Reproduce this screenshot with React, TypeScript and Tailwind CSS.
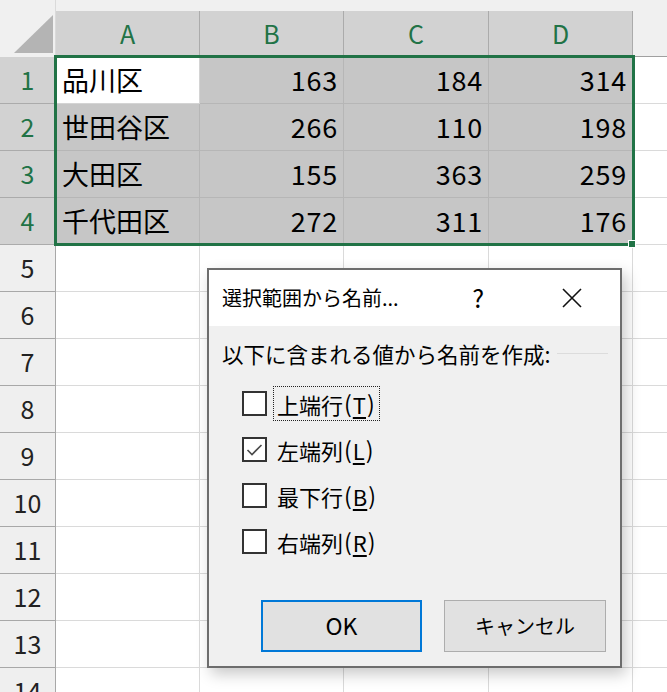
import React from 'react';

const FONT = { fontFamily: '"Noto Sans CJK JP", "Noto Sans", sans-serif' };

const COLS = ['A', 'B', 'C', 'D'];
const COL_W = ['w-[144px]', 'w-[144px]', 'w-[145px]', 'w-[144px]'];

const DATA: [string, number, number, number][] = [
  ['品川区', 163, 184, 314],
  ['世田谷区', 266, 110, 198],
  ['大田区', 155, 363, 259],
  ['千代田区', 272, 311, 176],
];

function HeaderRow() {
  return (
    <div className="flex h-[57px]">
      {/* corner with the select-all triangle */}
      <div className="relative w-[56px] shrink-0 border-r border-[#dadada] bg-[#f0f0f0]">
        <svg className="absolute left-0 top-0" width="56" height="57" viewBox="0 0 56 57">
          <polygon points="14,53 53,53 53,15" fill="#b4b4b4" />
        </svg>
      </div>
      <div className="flex flex-col">
        <div className="h-[11px] bg-[#f0f0f0]" />
        <div className="flex h-[46px]">
          {COLS.map((c, i) => (
            <div
              key={c}
              className={`${COL_W[i]} flex items-center justify-center border-r border-[#ababab] bg-[#d2d2d2] text-[25px] text-[#217346]`}
            >
              {c}
            </div>
          ))}
        </div>
      </div>
      <div className="flex-1 border-b border-[#a0a0a0] bg-[#f0f0f0]" />
    </div>
  );
}

function DataRow({ n, row }: { n: number; row?: [string, number, number, number] }) {
  const selected = !!row;
  return (
    <div className="flex h-[47px]">
      <div
        className={`flex w-[56px] shrink-0 items-center justify-center border-b border-r text-[25px] ${
          selected
            ? 'border-[#ababab] bg-[#d2d2d2] text-[#217346]'
            : 'border-[#a8a8a8] bg-[#efefef] text-[#222]'
        }`}
      >
        {n}
      </div>
      {COLS.map((c, i) => {
        const active = n === 1 && i === 0;
        const val = row ? (i === 0 ? row[0] : row[i]) : '';
        return (
          <div
            key={c}
            className={`${COL_W[i]} flex items-center border-b border-r text-[27px] text-black ${
              selected
                ? active
                  ? 'border-[#d4d4d4] bg-white'
                  : 'border-[#b6b6b6] bg-[#c6c6c6]'
                : 'border-[#dadada] bg-white'
            } ${i === 0 ? 'justify-start pl-[6px]' : 'justify-end pr-[5px] tracking-[0.8px]'}`}
          >
            {val}
          </div>
        );
      })}
      <div className="flex-1 border-b border-[#dadada] bg-white" />
    </div>
  );
}

function CheckRow({
  label,
  mn,
  checked,
  focused,
}: {
  label: string;
  mn: string;
  checked?: boolean;
  focused?: boolean;
}) {
  return (
    <div className="flex h-[46px] items-center">
      <div className="flex h-[25px] w-[25px] items-center justify-center border-2 border-[#333] bg-white">
        {checked && (
          <svg width="17" height="14" viewBox="0 0 17 14">
            <polyline points="1.5,7 6,11.5 15.5,2" fill="none" stroke="#4a4a4a" strokeWidth="1.6" />
          </svg>
        )}
      </div>
      <div
        className={`ml-[7px] flex h-[33px] items-center px-[3px] text-[22px] leading-none text-black ${
          focused ? 'outline-1 outline-dotted outline-[#222]' : ''
        }`}
      >
        {label}
        <span className="px-[1px] text-[23px]">(</span>
        <span className="underline underline-offset-[3px]">{mn}</span>
        <span className="px-[1px] text-[23px]">)</span>
      </div>
    </div>
  );
}

function Dialog() {
  return (
    <div className="absolute left-[207px] top-[268px] flex h-[400px] w-[415px] flex-col border-2 border-[#6d6d6d] bg-[#f0f0f0] shadow-[4px_6px_14px_rgba(0,0,0,0.22)]">
      <div className="flex h-[56px] items-center bg-white text-[20px] text-black">
        <span className="ml-[13px]">選択範囲から名前...</span>
        <span className="ml-auto mr-[78px] text-[25px]">?</span>
        <svg className="mr-[38px]" width="20" height="20" viewBox="0 0 20 20">
          <path d="M1 1 L19 19 M19 1 L1 19" stroke="#111" strokeWidth="1.6" />
        </svg>
      </div>
      <div className="flex items-center pl-[13px] pt-[17px] text-[21.5px] leading-none text-black">
        <span>以下に含まれる値から名前を作成:</span>
        <div className="ml-[7px] mr-[12px] h-px flex-1 bg-[#dcdcdc]" />
      </div>
      <div className="ml-[33px] mt-[16px] flex flex-col">
        <CheckRow label="上端行" mn="T" focused />
        <CheckRow label="左端列" mn="L" checked />
        <CheckRow label="最下行" mn="B" />
        <CheckRow label="右端列" mn="R" />
      </div>
      <div className="ml-[52px] mt-[35px] flex gap-[22px]">
        <button className="flex h-[52px] w-[161px] items-center justify-center border-2 border-[#0078d7] bg-[#e1e1e1] text-[23px] text-black">
          OK
        </button>
        <button className="flex h-[52px] w-[162px] items-center justify-center border border-[#adadad] bg-[#e1e1e1] text-[20px] text-black">
          キャンセル
        </button>
      </div>
    </div>
  );
}

export default function App() {
  const rows = Array.from({ length: 14 }, (_, i) => i + 1);
  return (
    <div className="relative h-[692px] w-[667px] overflow-hidden bg-white" style={FONT}>
      <HeaderRow />
      {rows.map((n) => (
        <DataRow key={n} n={n} row={DATA[n - 1]} />
      ))}

      {/* selection frame and fill handle */}
      <div className="pointer-events-none absolute left-[54px] top-[55px] h-[191px] w-[581px] border-[3px] border-[#217346]" />
      <div className="absolute left-[628px] top-[240px] h-[8px] w-[8px] border border-white bg-[#217346]" />

      <Dialog />
    </div>
  );
}
